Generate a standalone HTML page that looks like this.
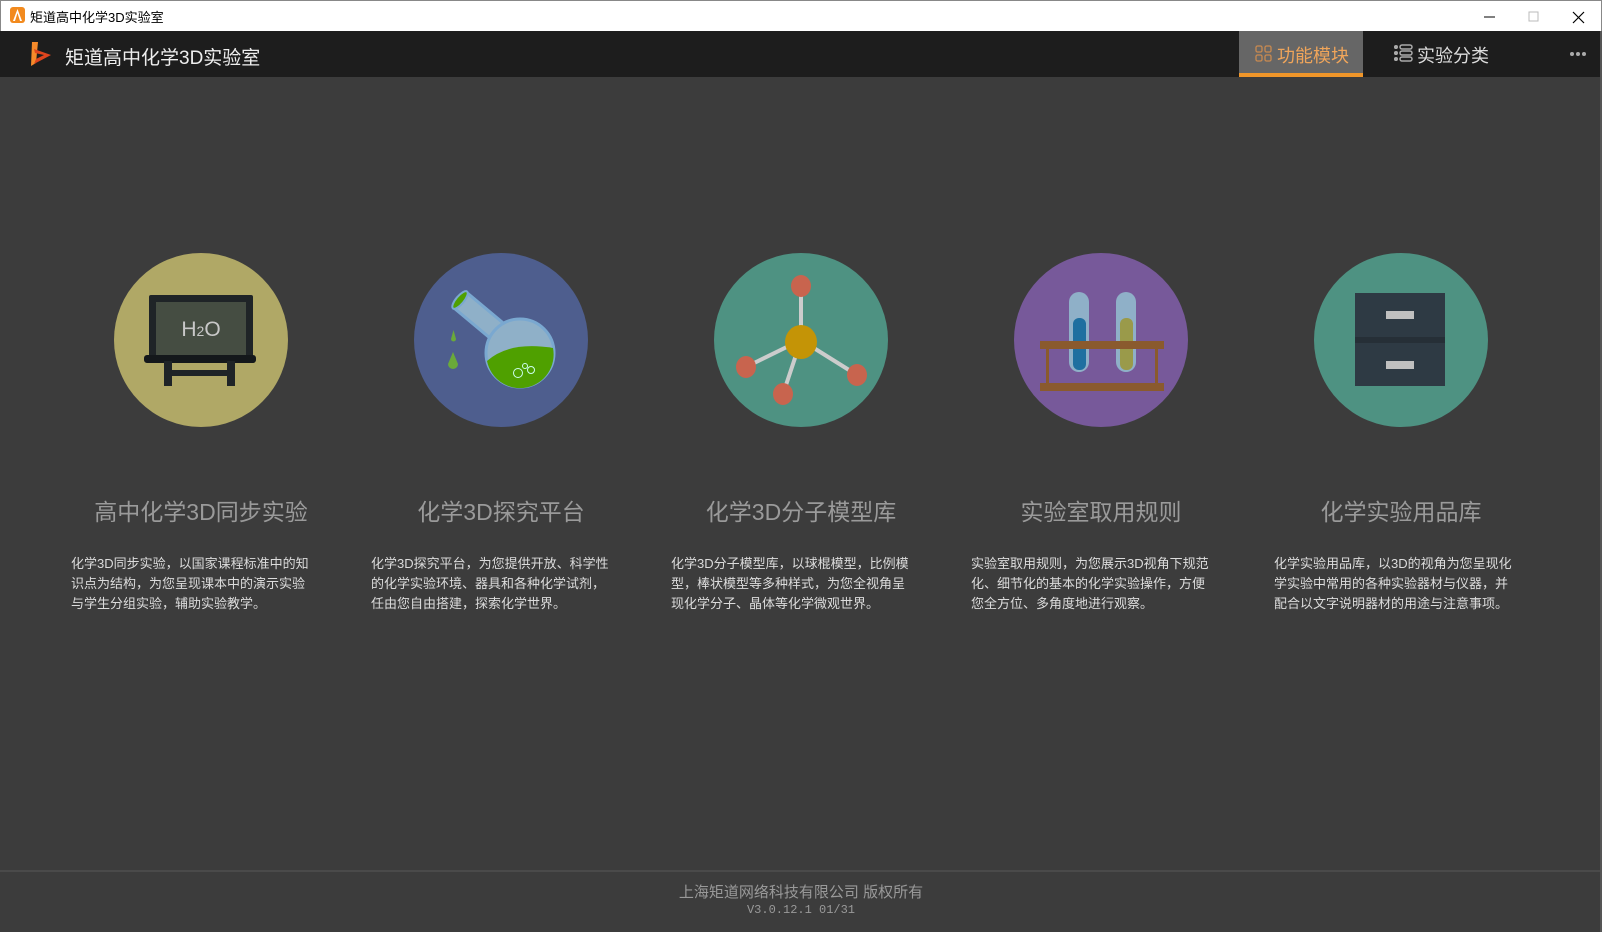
<!DOCTYPE html>
<html><head><meta charset="utf-8"><style>
*{margin:0;padding:0;box-sizing:border-box}
body{width:1602px;height:932px;overflow:hidden;background:#3c3c3c;font-family:"Liberation Sans","Noto Sans CJK SC",sans-serif;position:relative}
.tb{position:absolute;left:0;top:0;width:1602px;height:31px;background:#fff;border:1px solid #888;border-bottom:none}
.tb .t{position:absolute;left:29px;top:6px;font-size:13px;color:#000}
.hd{position:absolute;left:0;top:31px;width:1602px;height:46px;background:#1d1d1d}
.hd .n{position:absolute;left:65px;top:12px;font-size:19px;color:#eee}
.tab1{position:absolute;left:1239px;top:31px;width:124px;height:46px;background:#666;border-bottom:4px solid #f0962a}
.tab1 span{position:absolute;left:38px;top:11px;font-size:18px;color:#f0a55a}
.tab2{position:absolute;left:1390px;top:42px;font-size:18px;color:#ddd}
.c{position:absolute;width:174px;height:174px;border-radius:50%;top:253px}
.ti{position:absolute;top:493px;width:300px;text-align:center;font-size:23px;color:#9a9a9a}
.ds{position:absolute;top:554px;width:260px;font-size:13px;line-height:20px;color:#dcdcdc;white-space:nowrap}
.ft{position:absolute;left:0;top:870px;width:1602px;height:2px;background:#4a4a4a}
</style></head><body>
<div class="tb">
<svg style="position:absolute;left:9px;top:6px" width="15" height="16"><rect width="15" height="16" rx="3" fill="#f28a1e"/><path d="M7.5 2 L12 14 H3 Z" fill="#fff"/><path d="M7.5 6 L10 14 H5Z" fill="#f28a1e"/></svg>
<div class="t">矩道高中化学3D实验室</div>
<svg style="position:absolute;left:1480px;top:8px" width="110" height="16"><line x1="3" y1="8" x2="14" y2="8" stroke="#000"/><rect x="48" y="3" width="9" height="9" fill="none" stroke="#bbb"/><path d="M92 3 L103 14 M103 3 L92 14" stroke="#000" stroke-width="1.2"/></svg>
</div>
<div class="hd">
<svg style="position:absolute;left:26px;top:10px" width="26" height="26"><path d="M6 1 L12 1 L10 22 L5 25Z" fill="#f58a2a"/><path d="M8 8 L25 14 L8 23 L10 18 L18 14 L9 12Z" fill="#e0451e"/></svg>
<div class="n">矩道高中化学3D实验室</div>
<svg style="position:absolute;left:1569px;top:20px" width="18" height="6"><circle cx="3" cy="3" r="2" fill="#aaa"/><circle cx="9" cy="3" r="2" fill="#aaa"/><circle cx="15" cy="3" r="2" fill="#aaa"/></svg>
</div>
<div class="tab1"><svg style="position:absolute;left:16px;top:14px" width="18" height="18" fill="none" stroke="#c98a50" stroke-width="1.3"><rect x="1" y="1" width="6" height="6" rx="1.5"/><rect x="10" y="1" width="6" height="6" rx="1.5"/><rect x="1" y="10" width="6" height="6" rx="1.5"/><rect x="10" y="10" width="6" height="6" rx="1.5"/></svg><span>功能模块</span></div>
<svg style="position:absolute;left:1394px;top:44px" width="19" height="19" fill="none" stroke="#aaa" stroke-width="1.5"><circle cx="2" cy="3" r="1.3" fill="#aaa"/><circle cx="2" cy="9" r="1.3" fill="#aaa"/><circle cx="2" cy="15" r="1.3" fill="#aaa"/><rect x="6" y="1" width="12" height="4" rx="2"/><rect x="6" y="7" width="12" height="4" rx="2"/><rect x="6" y="13" width="12" height="4" rx="2"/></svg>
<div class="tab2" style="left:1417px">实验分类</div>

<div class="c" style="left:114px;background:#b0a866"></div>
<svg style="position:absolute;left:144px;top:293px" width="118" height="95"><rect x="5" y="2" width="104" height="65" rx="2" fill="#1f2427"/><rect x="12" y="9" width="90" height="53" fill="#454d42"/><text x="57" y="43" font-size="21" fill="#c8c8c8" text-anchor="middle" font-family="Liberation Sans">H<tspan font-size="14">2</tspan>O</text><rect x="0" y="62" width="112" height="8" rx="3" fill="#14181b"/><rect x="20" y="68" width="8" height="25" fill="#1f2427"/><rect x="83" y="68" width="8" height="25" fill="#1f2427"/><rect x="20" y="77" width="70" height="6" fill="#1f2427"/></svg>

<div class="c" style="left:414px;background:#4e5e8e"></div>
<svg style="position:absolute;left:414px;top:253px" width="174" height="174">
<polygon points="52.4,39.3 39.6,54.7 81.6,89.7 94.4,74.3" fill="#8fb0c8" stroke="#7aa8d0" stroke-width="3"/>
<circle cx="106" cy="100" r="34" fill="#8fb0c8" stroke="#7aa8d0" stroke-width="3"/>
<ellipse cx="46" cy="47" rx="11" ry="4" transform="rotate(-50 46 47)" fill="#4fa000" stroke="#7aa8d0" stroke-width="2"/>
<path d="M73 108 Q95 88 139 95 A33 33 0 0 1 73 108Z" fill="#4fa000"/>
<path d="M37 86 l2.5 -9 l2.5 9 a2.5 2.5 0 0 1 -5 0Z" fill="#6aaa3a"/>
<path d="M34 111 l5 -12 l5 12 a5 5 0 0 1 -10 0Z" fill="#6aaa3a"/>
<circle cx="104" cy="120" r="4.5" fill="none" stroke="#cfe"/><circle cx="111" cy="113" r="2.5" fill="none" stroke="#cfe"/><circle cx="117" cy="117" r="3.5" fill="none" stroke="#cfe"/></svg>

<div class="c" style="left:714px;background:#4e9282"></div>
<svg style="position:absolute;left:730px;top:270px" width="140" height="140"><g stroke="#ccc" stroke-width="4"><line x1="71" y1="12" x2="71" y2="70"/><line x1="71" y1="70" x2="16" y2="97"/><line x1="71" y1="70" x2="53" y2="124"/><line x1="71" y1="70" x2="127" y2="105"/></g><ellipse cx="71" cy="16" rx="10" ry="11" fill="#c8644e"/><ellipse cx="16" cy="97" rx="10" ry="11" fill="#c8644e"/><ellipse cx="53" cy="124" rx="10" ry="11" fill="#c8644e"/><ellipse cx="127" cy="105" rx="10" ry="11" fill="#c8644e"/><ellipse cx="71" cy="72" rx="16" ry="17" fill="#c49406"/></svg>

<div class="c" style="left:1014px;background:#77599a"></div>
<svg style="position:absolute;left:1038px;top:288px" width="130" height="110"><rect x="31" y="4" width="20" height="80" rx="10" fill="#8fb0c8"/><rect x="35" y="30" width="13" height="52" rx="6" fill="#1f6fa0"/><rect x="78" y="4" width="20" height="80" rx="10" fill="#8fb0c8"/><rect x="82" y="30" width="13" height="52" rx="6" fill="#9a9a4a"/><rect x="2" y="53" width="124" height="8" fill="#8a5a2e"/><rect x="2" y="95" width="124" height="8" fill="#8a5a2e"/><rect x="8" y="60" width="3" height="36" fill="#8a5a2e"/><rect x="117" y="60" width="3" height="36" fill="#8a5a2e"/></svg>

<div class="c" style="left:1314px;background:#4e9282"></div>
<svg style="position:absolute;left:1355px;top:293px" width="92" height="95"><rect width="90" height="93" fill="#2e3a44"/><rect y="44" width="90" height="6" fill="#262f37"/><rect x="31" y="18" width="28" height="8" fill="#c0c0c0"/><rect x="31" y="68" width="28" height="8" fill="#c0c0c0"/></svg>

<div class="ti" style="left:51px">高中化学3D同步实验</div>
<div class="ti" style="left:351px">化学3D探究平台</div>
<div class="ti" style="left:651px">化学3D分子模型库</div>
<div class="ti" style="left:951px">实验室取用规则</div>
<div class="ti" style="left:1251px">化学实验用品库</div>

<div class="ds" style="left:71px">化学3D同步实验，以国家课程标准中的知<br>识点为结构，为您呈现课本中的演示实验<br>与学生分组实验，辅助实验教学。</div>
<div class="ds" style="left:371px">化学3D探究平台，为您提供开放、科学性<br>的化学实验环境、器具和各种化学试剂，<br>任由您自由搭建，探索化学世界。</div>
<div class="ds" style="left:671px">化学3D分子模型库，以球棍模型，比例模<br>型，棒状模型等多种样式，为您全视角呈<br>现化学分子、晶体等化学微观世界。</div>
<div class="ds" style="left:971px">实验室取用规则，为您展示3D视角下规范<br>化、细节化的基本的化学实验操作，方便<br>您全方位、多角度地进行观察。</div>
<div class="ds" style="left:1274px">化学实验用品库，以3D的视角为您呈现化<br>学实验中常用的各种实验器材与仪器，并<br>配合以文字说明器材的用途与注意事项。</div>

<div class="ft"></div>
<div style="position:absolute;left:0;top:881px;width:1602px;text-align:center;font-size:15px;color:#999">上海矩道网络科技有限公司 版权所有</div>
<div style="position:absolute;left:0;top:903px;width:1602px;text-align:center;font-size:12px;color:#999;font-family:'Liberation Mono',monospace">V3.0.12.1 01/31</div>
<div style="position:absolute;right:0;top:31px;width:2px;height:901px;background:#555"></div>
</body></html>
